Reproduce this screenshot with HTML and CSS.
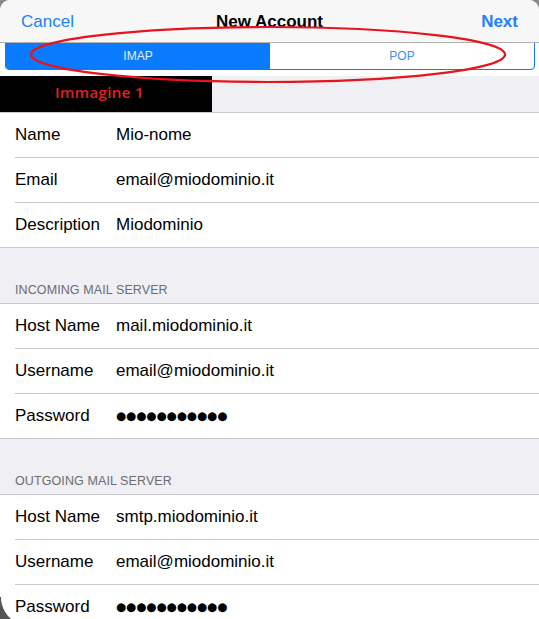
FILE: index.html
```html
<!DOCTYPE html>
<html>
<head>
<meta charset="utf-8">
<link rel="stylesheet" href="styles.css">
</head>
<body>
<div class="screen">
  <header class="navbar">
    <span class="nav-btn">Cancel</span>
    <span class="nav-title">New Account</span>
    <span class="nav-btn nav-next">Next</span>
  </header>
  <div class="segment-wrap">
    <div class="segment">
      <div class="seg seg-on">IMAP</div>
      <div class="seg">POP</div>
    </div>
  </div>
  <div class="label-band">
    <div class="label-box">Immagine 1</div>
  </div>
  <section class="group">
    <div class="row"><span class="key">Name</span><span class="val">Mio-nome</span></div>
    <div class="row"><span class="key">Email</span><span class="val">email@miodominio.it</span></div>
    <div class="row"><span class="key">Description</span><span class="val">Miodominio</span></div>
  </section>
  <div class="section-head">INCOMING MAIL SERVER</div>
  <section class="group">
    <div class="row"><span class="key">Host Name</span><span class="val">mail.miodominio.it</span></div>
    <div class="row"><span class="key">Username</span><span class="val">email@miodominio.it</span></div>
    <div class="row"><span class="key">Password</span><span class="val dots">●●●●●●●●●●●</span></div>
  </section>
  <div class="section-head">OUTGOING MAIL SERVER</div>
  <section class="group">
    <div class="row"><span class="key">Host Name</span><span class="val">smtp.miodominio.it</span></div>
    <div class="row"><span class="key">Username</span><span class="val">email@miodominio.it</span></div>
    <div class="row"><span class="key">Password</span><span class="val dots">●●●●●●●●●●●</span></div>
  </section>
  <svg class="ellipse" width="539" height="100" viewBox="0 0 539 100">
    <ellipse cx="268" cy="54.5" rx="237" ry="27.5" fill="none" stroke="#e8141c" stroke-width="2.2"/>
  </svg>
  <div class="corner-bl"></div>
</div>
</body>
</html>
```
FILE: styles.css
```css
html, body {
  margin: 0;
  padding: 0;
  background: #8a8a8a;
}
body {
  width: 539px;
  height: 619px;
  overflow: hidden;
  font-family: "Liberation Sans", Arial, sans-serif;
}
.screen {
  position: relative;
  width: 539px;
  height: 640px;
  background: #efeff4;
  border-radius: 10px 10px 0 0;
  overflow: hidden;
}
.navbar {
  background: #f7f7f8;
  border-bottom: 1px solid #b2b2b2;
  display: flex;
  align-items: center;
  justify-content: space-between;
  padding: 1px 21px 0 21px;
  box-sizing: content-box;
  height: 41px;
  position: relative;
  z-index: 2;
}
.nav-btn {
  color: #1a82fb;
  font-size: 17px;
}
.nav-next {
  font-weight: bold;
}
.nav-title {
  position: absolute;
  left: 0;
  right: 0;
  text-align: center;
  font-weight: bold;
  font-size: 17px;
  color: #000;
  pointer-events: none;
}
.segment-wrap {
  background: #fff;
  padding: 0 4px 0 5px;
  height: 37px;
  margin-top: -4px;
}
.segment {
  display: flex;
  height: 31px;
  border: 1px solid #0a7aff;
  border-radius: 0 0 4px 4px;
  box-sizing: border-box;
  overflow: hidden;
}
.seg {
  flex: 1;
  display: flex;
  align-items: center;
  justify-content: center;
  padding-top: 2px;
  font-size: 12px;
  color: #3b8ffb;
}
.seg-on {
  background: #0a7aff;
  color: #e4eeff;
}
.label-band {
  background: #efeff4;
  border-bottom: 1px solid #c8c7cc;
  box-sizing: border-box;
  height: 37px;
}
.label-box {
  width: 212px;
  height: 36px;
  background: #000;
  color: #e5201e;
  font-family: "Open Sans", "DejaVu Sans", sans-serif;
  font-size: 15px;
  font-weight: 600;
  box-sizing: border-box;
  padding: 6px 0 0 55px;
  letter-spacing: 0.4px;
}
.group {
  background: #fff;
  border-bottom: 1px solid #c8c7cc;
}
.row {
  height: 44px;
  display: flex;
  align-items: center;
  margin-left: 15px;
  border-bottom: 1px solid #c8c7cc;
  font-size: 17px;
  color: #000;
}
.row:last-child {
  border-bottom: none;
}
.key {
  width: 101px;
  flex: none;
}
.val {
  color: #000;
}
.dots {
  font-family: "DejaVu Sans", sans-serif;
  font-size: 11.6px;
  letter-spacing: 0;
}
.section-head {
  height: 56px;
  box-sizing: border-box;
  padding: 35px 0 0 15px;
  font-size: 12.5px;
  color: #6d6d72;
  border-bottom: 1px solid #c8c7cc;
  letter-spacing: 0.1px;
}
.ellipse {
  position: absolute;
  left: 0;
  top: 0;
  z-index: 5;
}
.corner-bl {
  position: absolute;
  left: 0;
  top: 597px;
  width: 16px;
  height: 24px;
  background: radial-gradient(circle at 30px 0px, transparent 28.5px, #555 29.5px);
  z-index: 4;
}
```
